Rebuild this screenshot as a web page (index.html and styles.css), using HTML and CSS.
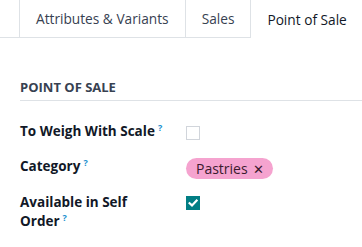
FILE: index.html
```html
<!DOCTYPE html>
<html>
<head>
<meta charset="utf-8">
<link rel="stylesheet" href="styles.css">
</head>
<body>
<nav class="tabs">
  <div class="tab">Attributes &amp; Variants</div>
  <div class="tab">Sales</div>
  <div class="tab active">Point of Sale</div>
</nav>
<section class="group">
  <h2 class="group-title">POINT OF SALE</h2>
  <div class="fields">
    <div class="label">To Weigh With Scale<sup class="help">?</sup></div>
    <div class="value"><span class="checkbox"></span></div>

    <div class="label">Category<sup class="help">?</sup></div>
    <div class="value"><span class="tag">Pastries <span class="tag-x">✕</span></span></div>

    <div class="label label-narrow">Available in Self Order<sup class="help">?</sup></div>
    <div class="value"><span class="checkbox checked"><svg viewBox="0 0 14 14" width="14" height="14"><path d="M3.6 7.2 L6 9.4 L10.6 4.6" fill="none" stroke="#fff" stroke-width="2.2" stroke-linecap="square"/></svg></span></div>
  </div>
</section>
</body>
</html>
```

FILE: styles.css
```css
html, body {
  margin: 0;
  padding: 0;
  background: #fff;
}
body {
  font-family: "Open Sans", "Noto Sans", sans-serif;
  font-size: 13px;
  color: #1f2937;
  width: 362px;
  overflow: hidden;
}
.tabs {
  display: flex;
  height: 37px;
  border-bottom: 1px solid #dee2e6;
  padding-left: 19px;
  white-space: nowrap;
}
.tab {
  display: flex;
  align-items: center;
  padding: 0 16px;
  border-left: 1px solid #dee2e6;
  color: #374151;
  font-size: 13.7px;
  height: 37px;
}
.tab:nth-child(2) {
  border-right: 1px solid #dee2e6;
}
.tab.active {
  border-left: none;
  height: 38px;
  background: #fff;
  color: #111827;
  margin-bottom: -1px;
}
.group {
  padding: 0 0 0 20px;
}
.group-title {
  margin: 39px 0 0;
  font-size: 13px;
  font-weight: 700;
  color: #374151;
  line-height: 20px;
  padding-bottom: 3px;
  border-bottom: 1px solid #dee2e6;
}
.fields {
  display: grid;
  grid-template-columns: 166px 1fr;
  row-gap: 16px;
  margin-top: 21px;
}
.label {
  font-weight: 700;
  font-size: 13.5px;
  line-height: 19px;
  color: #111827;
  padding-right: 4px;
}
.label-narrow {
  padding-right: 30px;
}
.help {
  color: #1a8fcf;
  font-size: 9px;
  line-height: 1;
  font-weight: 700;
  margin-left: 3px;
  vertical-align: top;
  position: relative;
  top: 1px;
}
.value {
  display: flex;
  align-items: flex-start;
}
.checkbox {
  display: inline-block;
  box-sizing: border-box;
  width: 14px;
  height: 14px;
  border: 1px solid #d1d5db;
  margin-top: 4px;
}
.checkbox.checked {
  background: #017e84;
  border-color: #017e84;
  position: relative;
  margin-top: 3px;
}
.checkbox.checked svg {
  position: absolute;
  left: -1px;
  top: -1px;
}
.tag {
  display: inline-flex;
  align-items: center;
  background: #f5a3cf;
  color: #3b1a2e;
  border-radius: 11px;
  height: 21px;
  padding: 0 9px 0 10px;
  font-size: 14px;
  margin-top: 1px;
  margin-bottom: -2px;
}
.tag-x {
  margin-left: 5px;
  font-size: 13px;
}
```
